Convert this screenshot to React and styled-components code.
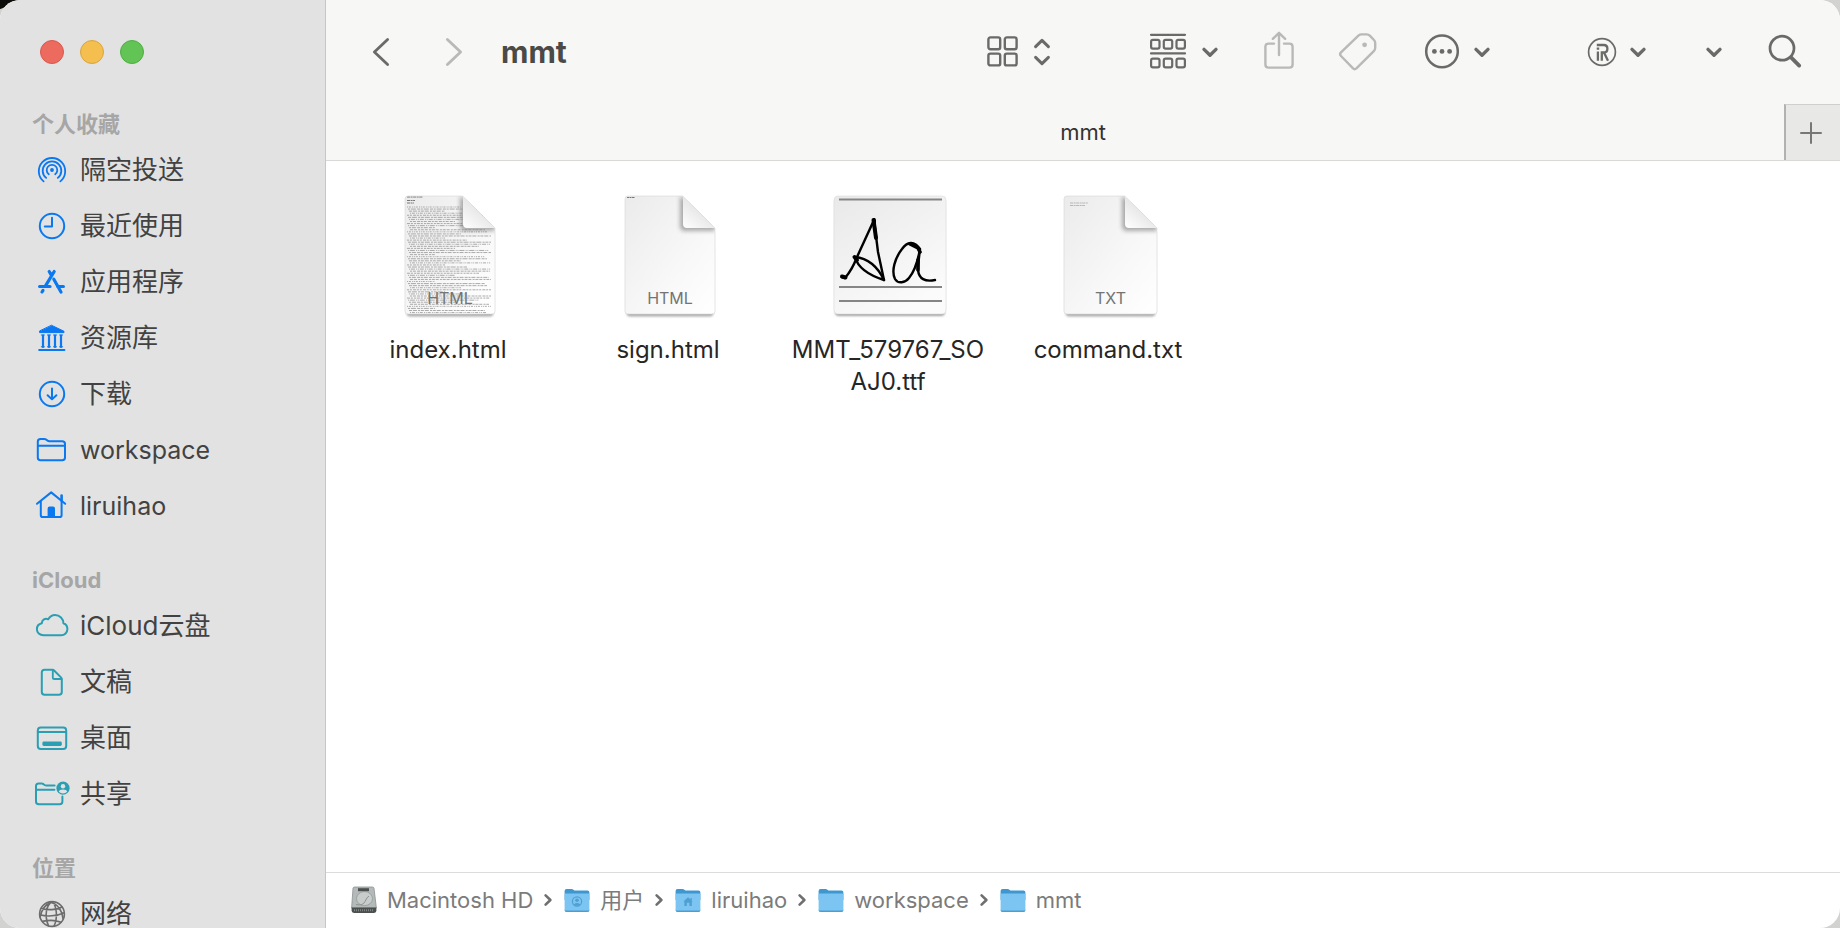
import React from "react";
import styled, { createGlobalStyle } from "styled-components";

const BLUE = "#0a78f0";
const TEAL = "#2a9fb3";
const GREY = "#6c6c6c";
const FONT = `Inter, "Noto Sans CJK SC", sans-serif`;

const GlobalStyle = createGlobalStyle`
  *, *::before, *::after { box-sizing: border-box; }
  body {
    margin: 0;
    font-family: ${FONT};
    background: linear-gradient(158deg, #0c0c08 0 8px, #d2d2d0 9px);
    -webkit-font-smoothing: antialiased;
  }
  button { font: inherit; color: inherit; background: none; border: 0; padding: 0; }
  ul, ol { list-style: none; margin: 0; padding: 0; }
  a { color: inherit; text-decoration: none; }
  svg { display: block; overflow: visible; flex: none; }
`;

const Window = styled.div`
  display: grid;
  grid-template-columns: 326px minmax(0, 1fr);
  height: 100vh;
  border-radius: 20px;
  overflow: hidden;
  background: #fff;
`;

const Sidebar = styled.aside`
  display: flex;
  flex-direction: column;
  min-height: 0;
  background: #e2e2e2;
  border-right: 1px solid #c6c6c6;
  overflow-y: auto;
  scrollbar-width: none;
`;

const TrafficLights = styled.div`
  display: flex;
  flex: none;
  gap: 16px;
  padding: 40px;
  height: 106px;
`;

const Light = styled.button`
  width: 24px;
  height: 24px;
  border-radius: 50%;
  background: ${(p) => p.$color};
  border: 1px solid ${(p) => p.$edge};
`;

const Section = styled.section`
  flex: none;
  margin-bottom: 28px;
`;

const SectionTitle = styled.h2`
  margin: 0;
  padding: 0 0 0 32px;
  height: 36px;
  font-size: 22px;
  font-weight: 700;
  line-height: 36px;
  color: #a6a6a6;
`;

const PlaceLink = styled.a`
  display: flex;
  align-items: center;
  gap: 11px;
  height: 56px;
  padding-left: 35px;
  font-size: ${(p) => (p.$latin ? "25px" : "26px")};
  line-height: 26px;
  color: #424242;
`;

const Main = styled.main`
  display: flex;
  flex-direction: column;
  min-width: 0;
  min-height: 0;
`;

const Toolbar = styled.header`
  display: flex;
  flex: none;
  align-items: center;
  height: 104px;
  padding: 0 38px 0 46px;
  background: #f7f7f5;
  color: #6a6a68;
`;

const History = styled.div`
  display: flex;
  gap: 55px;
`;

const Title = styled.h1`
  margin: 0 auto 0 38px;
  font-size: 30px;
  font-weight: 700;
  line-height: 36px;
  color: #4a4a48;
`;

const ToolGroups = styled.div`
  display: flex;
  gap: 96px;
`;

const ToolGroup = styled.div`
  display: flex;
  gap: 44px;
`;

const ToolButton = styled.button`
  display: flex;
  align-items: center;
  gap: 12px;
  height: 40px;
  padding-left: ${(p) => (p.$inset ? "12px" : "0")};
  &:disabled { color: #b9b9b7; }
`;

const TabBar = styled.div`
  display: grid;
  flex: none;
  grid-template-columns: 56px 1fr 56px;
  height: 57px;
  background: #f7f7f5;
  border-bottom: 1px solid #d9d9d8;
`;

const Tab = styled.button`
  grid-column: 2;
  font-size: 22px;
  font-weight: 400;
  line-height: 28px;
  color: #333331;
`;

const NewTab = styled.button`
  display: flex;
  align-items: center;
  justify-content: center;
  padding-right: 4px;
  background: #e8e8e7;
  border-left: 2px solid #b2b2b1;
  border-top: 1px solid #cfcfce;
  color: #777776;
`;

const Files = styled.ul`
  display: grid;
  flex: 1;
  grid-template-columns: repeat(auto-fill, 220px);
  align-content: start;
  min-height: 0;
  padding: 35px 12px;
  overflow: hidden;
`;

const FileItem = styled.li`
  display: flex;
  flex-direction: column;
  align-items: center;
  gap: 18px;
`;

const Thumbnail = styled.div`
  padding-left: 4px;
`;

const FileName = styled.span`
  font-size: 24px;
  line-height: 32px;
  text-align: center;
  color: #262626;
`;

const Badge = styled.text`
  font-family: ${FONT};
  font-size: 16px;
  fill: #747474;
  text-anchor: middle;
`;

const PathBar = styled.nav`
  flex: none;
  height: 56px;
  padding: 0 25px 2px;
  border-top: 1px solid #dcdcdc;
`;

const Crumbs = styled.ol`
  display: flex;
  align-items: center;
  height: 100%;
`;

const Crumb = styled.li`
  display: flex;
  align-items: center;
  gap: 11px;
`;

const CrumbLink = styled.a`
  display: flex;
  align-items: center;
  gap: 10px;
  font-size: 22px;
  line-height: 28px;
  color: #7b7b7b;
`;

const CrumbArrow = styled.span`
  padding-right: 12px;
  color: #6f6f6f;
`;

function Glyph({ w = 34, h = 34, color = "currentColor", sw = 2, children }) {
  return (
    <svg
      width={w}
      height={h}
      viewBox={`0 0 ${w} ${h}`}
      fill="none"
      stroke={color}
      strokeWidth={sw}
      strokeLinecap="round"
      strokeLinejoin="round"
      aria-hidden="true"
    >
      {children}
    </svg>
  );
}

const AirDropIcon = () => (
  <Glyph color={BLUE} sw={1.8}>
    <circle cx="17" cy="17" r="1.9" fill={BLUE} stroke="none" />
    <path d="M13.8 21.3a5.3 5.3 0 1 1 6.4 0" />
    <path d="M11.2 24.9a9.3 9.3 0 1 1 11.6 0" />
    <path d="M8.6 28.4a13.2 13.2 0 1 1 16.8 0" />
  </Glyph>
);

const ClockIcon = () => (
  <Glyph color={BLUE}>
    <circle cx="17" cy="17" r="12.2" />
    <path d="M17 8.8V17.6H9.8" />
  </Glyph>
);

const AppsIcon = () => (
  <Glyph color={BLUE} sw={3.2}>
    <path d="M19.2 6.5L10.2 21.3M14.2 6.5L16.2 9.8M18.8 14.2L26 27M4.6 21.5H15M22.6 21.5H28.4M8 25.4L7 27" />
  </Glyph>
);

const LibraryIcon = () => (
  <Glyph color={BLUE}>
    <path d="M16.8 4.4L29 10.3V11.6H4.6V10.3Z" fill={BLUE} strokeWidth="1" />
    <path d="M8 14.5V26M14 14.5V26M20 14.5V26M26 14.5V26" strokeWidth="2.2" />
    <path d="M6.3 14H9.4M12.4 14H15.5M18.5 14H21.6M24.6 14H27.6M6.3 25.8H9.4M12.4 25.8H15.5M18.5 25.8H21.6M24.6 25.8H27.6" strokeWidth="1" />
    <path d="M4.2 28.9H29.4" />
  </Glyph>
);

const DownloadIcon = () => (
  <Glyph color={BLUE}>
    <circle cx="17" cy="17" r="12.2" />
    <path d="M17 11.4V22.2M12.6 18.2L17 22.4L21.4 18.2" />
  </Glyph>
);

const FolderIcon = () => (
  <Glyph color={BLUE}>
    <path d="M2.8 24.4V8.6Q2.8 5.9 5.5 5.9H9.2Q10.5 5.9 11.4 6.7L12.4 7.6Q13.2 8.3 14.3 8.3H27.2Q30 8.3 30 11V24.4Q30 27.2 27.2 27.2H5.6Q2.8 27.2 2.8 24.4ZM2.8 12.8H30" />
  </Glyph>
);

const HomeIcon = () => (
  <Glyph color={BLUE}>
    <path d="M2 14.8L16.2 3.4L30.2 14.8" />
    <path d="M5.8 12.4V26.2Q5.8 28 7.6 28H24.8Q26.6 28 26.6 26.2V12.4" />
    <path d="M26.6 6.6V11.4" strokeWidth="2.6" />
    <path d="M13.6 27.4V19.6Q13.6 18.6 14.6 18.6H18Q19 18.6 19 19.6V27.4Z" fill={BLUE} />
  </Glyph>
);

const CloudIcon = () => (
  <Glyph color={TEAL}>
    <path d="M8.6 26.3C4.6 26.3 1.9 23.6 1.9 20.3C1.9 17.2 3.9 14.9 6.8 14.3C6.9 10.8 10.2 8.9 13.2 10.3C14.8 7.5 17.3 6 20 6C24.8 6 28.4 9.7 28.4 14.3C31 15.3 32.4 17.5 32.4 20C32.4 23.5 29.6 26.3 26.2 26.3Z" />
  </Glyph>
);

const DocumentIcon = () => (
  <Glyph color={TEAL}>
    <path d="M6.8 27V7.6Q6.8 4.8 9.6 4.8H17.4Q18.4 4.8 19.1 5.5L26 12.4Q26.8 13.2 26.8 14.4V27Q26.8 29.8 24 29.8H9.6Q6.8 29.8 6.8 27Z" />
    <path d="M17.8 5V12.4Q17.8 14 19.4 14H26.6" strokeWidth="1.8" />
  </Glyph>
);

const DesktopIcon = () => (
  <Glyph color={TEAL}>
    <rect x="2.8" y="6.6" width="28.4" height="21.4" rx="3" />
    <path d="M2.8 11H31.2" strokeWidth="1.8" />
    <rect x="7.4" y="20.6" width="19.4" height="4.4" rx="1.4" fill={TEAL} stroke="none" />
  </Glyph>
);

const SharedIcon = () => (
  <Glyph color={TEAL}>
    <path d="M19.6 8.6H11.4Q10.4 8.6 9.6 8L8.6 7.2Q7.8 6.5 6.6 6.5H3.6Q1 6.5 1 9.1V24.4Q1 27.2 3.8 27.2H24.6Q27.4 27.2 27.4 24.4V19.6M1 12.8H19.4" />
    <circle cx="28" cy="11.2" r="6.6" fill={TEAL} stroke="none" />
    <circle cx="28" cy="9.2" r="2.2" fill="#e2e2e2" stroke="none" />
    <path d="M23.8 14.8Q24.4 12.4 28 12.4Q31.6 12.4 32.2 14.8Q30.4 16.4 28 16.4Q25.6 16.4 23.8 14.8Z" fill="#e2e2e2" stroke="none" />
  </Glyph>
);

const NetworkIcon = () => (
  <Glyph color={GREY} sw={1.6}>
    <circle cx="17" cy="17" r="12.4" />
    <path d="M17 4.8C11 8.4 9.2 19 13.6 29M17 4.8C21.8 8 23 21 19 29.2M14.6 4.8C21.4 6.6 26.6 12 28 21.4M6.4 11.2C12.4 13.4 21.6 13.2 27 10M4.8 17.8C12 19.8 22 19.2 29.2 15.8M7.4 24.4C13 23.2 21.4 23.4 26 25.2M16 5C10.6 7.6 6.2 13 5.2 20" />
  </Glyph>
);

const ChevronDown = () => (
  <Glyph w={20} h={20} sw={3.4}>
    <path d="M4 7.4L10 13.2L16 7.4" />
  </Glyph>
);

const UpDownIcon = () => (
  <Glyph w={20} h={34} sw={3}>
    <path d="M3.6 11.6L10 5.4L16.4 11.6M3.6 22.4L10 28.6L16.4 22.4" />
  </Glyph>
);

const GridIcon = () => (
  <Glyph sw={2.4}>
    <rect x="2.4" y="2.4" width="11.8" height="11.8" rx="2" />
    <rect x="18.8" y="2.4" width="11.8" height="11.8" rx="2" />
    <rect x="2.4" y="18.6" width="11.8" height="11.8" rx="2" />
    <rect x="18.8" y="18.6" width="11.8" height="11.8" rx="2" />
  </Glyph>
);

const GroupIcon = () => (
  <Glyph w={40} h={40} sw={2.2}>
    <path d="M3 2.8H37M3 21.4H37" />
    {[7.8, 26.6].map((y) =>
      [3.1, 15.8, 28.5].map((x) => (
        <rect key={`${x}-${y}`} x={x} y={y} width="8.4" height="8.8" rx="1.8" />
      ))
    )}
  </Glyph>
);

const ShareIcon = () => (
  <Glyph w={30} h={40} sw={2.4}>
    <path d="M10 11.6H4.6Q1.4 11.6 1.4 14.8V32.4Q1.4 35.6 4.6 35.6H25.4Q28.6 35.6 28.6 32.4V14.8Q28.6 11.6 25.4 11.6H20" />
    <path d="M15 23V1.4M8.8 6.8L15 .8L21.2 6.8" />
  </Glyph>
);

const TagIcon = () => (
  <Glyph w={40} h={40} sw={2.4}>
    <path d="M20.4 3.6Q21.8 2.4 23.6 2.4H28.8Q30.6 2.4 31.8 3.6L36 8Q37.2 9.2 37.2 11V15.8Q37.2 17.8 35.8 19.2L18.4 36.4Q16.6 38 14.8 36.2L3 24Q1.2 22.2 3 20.4Z" />
    <circle cx="26.6" cy="12.8" r="2.4" fill="currentColor" stroke="none" />
  </Glyph>
);

const MoreIcon = () => (
  <Glyph w={38} h={40} sw={2.5}>
    <circle cx="20" cy="19.4" r="15.8" />
    <g fill="currentColor" stroke="none">
      <circle cx="12.4" cy="19.4" r="2.4" />
      <circle cx="20" cy="19.4" r="2.4" />
      <circle cx="27.6" cy="19.4" r="2.4" />
    </g>
  </Glyph>
);

const RegisteredLogo = () => (
  <Glyph w={28} h={28} sw={2.2}>
    <circle cx="14" cy="14" r="13.4" strokeWidth="1.7" />
    <g strokeLinecap="butt" strokeLinejoin="miter" strokeWidth="2.3">
      <path d="M8.8 7H15.8Q19.4 7 19.4 10.7Q19.4 14.4 15.8 14.4H13.8V22.8" />
      <path d="M16 14.6L20 22.8M9.900 13.400V22.8M8.700 10.600H11.200" />
    </g>
  </Glyph>
);

const SearchIcon = () => (
  <Glyph w={34} h={36} sw={2.7}>
    <circle cx="14" cy="14.2" r="12" />
    <path d="M23 23.4L31.2 31.6" strokeWidth="3.8" />
  </Glyph>
);

const PageShape = ({ id, w, children, label }) => {
  const f = w - 32;
  return (
    <svg width={w} height="120" viewBox={`0 0 ${w} 120`} aria-hidden="true">
      <defs>
        <linearGradient id={`${id}-page`} x1="0" y1="0" x2="1" y2="1">
          <stop offset="0" stopColor="#ebebeb" />
          <stop offset=".6" stopColor="#f8f8f8" />
          <stop offset="1" stopColor="#fff" />
        </linearGradient>
        <linearGradient id={`${id}-fold`} x1="0" y1="1" x2=".5" y2=".4">
          <stop offset="0" stopColor="#fff" />
          <stop offset="1" stopColor="#e6e6e6" />
        </linearGradient>
        <clipPath id={`${id}-clip`}>
          <path d={`M3 0H${f}L${w} 32V115Q${w} 118 ${w - 3} 118H3Q0 118 0 115V3Q0 0 3 0Z`} />
        </clipPath>
        <filter id={`${id}-blur`} x="-50%" y="-50%" width="200%" height="200%">
          <feGaussianBlur stdDeviation="2" />
        </filter>
        <filter id={`${id}-shade`} x="-10%" y="-10%" width="120%" height="120%">
          <feGaussianBlur stdDeviation="1" />
        </filter>
      </defs>
      <path
        d={`M3 40V116Q3 119 5 119H${w - 5}Q${w - 3} 119 ${w - 3} 116V40Z`}
        fill="#8a8a8a"
        stroke="#8a8a8a"
        strokeWidth="3"
        opacity=".7"
        filter={`url(#${id}-shade)`}
      />
      <g clipPath={`url(#${id}-clip)`}>
        <rect width={w} height="118" fill={`url(#${id}-page)`} />
        {children}
        <path d={`M${f - 3} 0V30Q${f - 3} 35 ${f + 2} 35H${w}V20Z`} fill="#777" opacity=".6" filter={`url(#${id}-blur)`} />
      </g>
      <path
        d={`M3 0H${f}M${w} 32V115Q${w} 118 ${w - 3} 118H3Q0 118 0 115V3Q0 0 3 0`}
        fill="none"
        stroke="#d6d6d6"
        strokeWidth=".6"
      />
      <path d={`M${f} 0L${w} 32H${f + 4}Q${f} 32 ${f} 28Z`} fill={`url(#${id}-fold)`} />
      <Badge x={w / 2} y="108">{label}</Badge>
    </svg>
  );
};

const codeLines = Array.from({ length: 52 }, (_, i) => ({
  y: 11 + i * 2.07,
  indent: (i * 5) % 4,
  end: [56, 40, 86, 74, 84, 30, 82, 86, 62, 85, 50, 86, 80][(i * 7) % 13],
  dash: `${1 + (i % 3)} .9 ${2 + ((i * 3) % 4)} 1.2 ${1 + ((i * 5) % 3)} .8`,
}));

const IndexPreview = () => (
  <PageShape id="index" w={90} label="HTML">
    <path d="M2 1H18M2 4.500H10M2 7H9" stroke="#777" strokeWidth="1" strokeDasharray="3 .6 2 .5" />
    {codeLines.map((l) => (
      <path
        key={l.y}
        d={`M${2 + l.indent} ${l.y}H${l.end}`}
        stroke="#a2a2a2"
        strokeWidth=".9"
        strokeDasharray={l.dash}
      />
    ))}
  </PageShape>
);

const SignPreview = () => (
  <PageShape id="sign" w={90} label="HTML">
    <path d="M2 1.500H10" stroke="#777" strokeWidth="1.2" strokeDasharray="2 .5" />
  </PageShape>
);

const CommandPreview = () => (
  <PageShape id="command" w={93} label="TXT">
    <path d="M6 7H24M6 9.500H21" stroke="#aaa" strokeWidth=".8" strokeDasharray="3 .6 2 .5" />
  </PageShape>
);

const FontPreview = () => (
  <svg width="112" height="120" viewBox="0 0 112 120" aria-hidden="true">
    <defs>
      <linearGradient id="font-page" x1="0" y1="0" x2=".6" y2="1">
        <stop offset="0" stopColor="#e9e9e9" />
        <stop offset="1" stopColor="#fbfbfb" />
      </linearGradient>
      <filter id="font-blur">
        <feGaussianBlur stdDeviation="1.2" />
      </filter>
    </defs>
    <rect x="1" y="3" width="110" height="117" rx="4" fill="#a2a2a2" filter="url(#font-blur)" />
    <rect width="112" height="118" rx="4" fill="url(#font-page)" stroke="#dcdcdc" strokeWidth=".6" />
    <path d="M5 3.500H108M5 91H108M5 105H108" stroke="#858585" strokeWidth="1.8" />
    <g fill="none" stroke="#000" strokeWidth="2.4" strokeLinecap="round" strokeLinejoin="round">
      <path d="M8 81L11 82Q18 74 23 61L40 24L44 56L50 84" />
      <path d="M40 24V28M39.500 24L42 42" strokeWidth="4" />
      <path d="M8 80.500L11.500 81.500" strokeWidth="4" />
      <path d="M50 84Q40 63 21 61Q25 76 50 84" />
      <path d="M20.500 61L23 64" strokeWidth="4" />
      <path d="M86 53C80 44 73 46 68 53C61 62 57 75 61 83C64 88 71 87 75 82C80 76 84 64 86 53C85 62 84 68 84 74C85 83 91 86 101 84" />
      <path d="M76 48L84 52L86 56M84 64L84 74" strokeWidth="3.6" />
    </g>
  </svg>
);

const DiskIcon = () => (
  <svg width="26" height="28" viewBox="0 0 26 28" aria-hidden="true">
    <path d="M3.500 1H21.500Q22.800 1 23 2.300L25.400 22H.6L2 2.300Q2.200 1 3.500 1Z" fill="#b4bab9" stroke="#8b9290" strokeWidth=".8" />
    <path d="M.6 21.500H25.400V24.600Q25.400 27 23 27H3Q.6 27 .6 24.600Z" fill="#4b504f" />
    <path d="M3 24.300H23" stroke="#7f8583" strokeWidth="2" strokeDasharray="1 1" />
    <ellipse cx="13.500" cy="12.600" rx="8" ry="7" fill="#c8cdcc" stroke="#949b99" strokeWidth=".8" />
    <path d="M5 18.500Q12 20 14 15.500T18 10" fill="none" stroke="#8d9492" strokeWidth="1" />
    <rect x="7" y="2.200" width="11" height="3" fill="#4b504f" />
  </svg>
);

const BlueFolder = ({ mark }) => (
  <svg width="26" height="28" viewBox="0 0 26 28" aria-hidden="true">
    <path d="M.6 5Q.6 3 2.600 3H7.600Q8.600 3 9.400 3.700L10.400 4.500H23.400Q25.400 4.500 25.400 6.500V14H.6Z" fill="#3f97cf" />
    <path d="M.6 8.500Q.6 7.500 1.600 7.500H24.400Q25.400 7.500 25.400 8.500V24Q25.400 26 23.400 26H2.600Q.6 26 .6 24Z" fill="#7cc5f2" />
    <path d="M.6 23.400V24Q.6 26 2.600 26H23.400Q25.400 26 25.400 24V23.400Q25 24.600 23.400 24.600H2.600Q1 24.600 .6 23.400Z" fill="#4a9fd2" />
    {mark === "user" && (
      <g stroke="#4f9fd2" fill="none">
        <circle cx="13" cy="15.500" r="4.600" strokeWidth="1.200" />
        <circle cx="13" cy="14.300" r="1.800" fill="#4f9fd2" stroke="none" />
        <path d="M9.800 18.400Q13 15.800 16.200 18.400Q13 21 9.800 18.400Z" fill="#4f9fd2" stroke="none" />
      </g>
    )}
    {mark === "home" && (
      <path d="M8.400 15.500L13 11.200L15.600 13.500V12H16.800V14.800L17.800 15.500H16.800V20H14.400V16.800H11.800V20H9.400V15.500Z" fill="#4f9fd2" />
    )}
  </svg>
);

const sections = [
  {
    title: "个人收藏",
    items: [
      { name: "隔空投送", Icon: AirDropIcon },
      { name: "最近使用", Icon: ClockIcon },
      { name: "应用程序", Icon: AppsIcon },
      { name: "资源库", Icon: LibraryIcon },
      { name: "下载", Icon: DownloadIcon },
      { name: "workspace", Icon: FolderIcon, latin: true },
      { name: "liruihao", Icon: HomeIcon, latin: true },
    ],
  },
  {
    title: "iCloud",
    items: [
      { name: "iCloud云盘", Icon: CloudIcon },
      { name: "文稿", Icon: DocumentIcon },
      { name: "桌面", Icon: DesktopIcon },
      { name: "共享", Icon: SharedIcon },
    ],
  },
  { title: "位置", items: [{ name: "网络", Icon: NetworkIcon }] },
];

const files = [
  { name: ["index.html"], Preview: IndexPreview },
  { name: ["sign.html"], Preview: SignPreview },
  { name: ["MMT_579767_SO", "AJ0.ttf"], Preview: FontPreview },
  { name: ["command.txt"], Preview: CommandPreview },
];

const crumbs = [
  { name: "Macintosh HD", icon: <DiskIcon /> },
  { name: "用户", icon: <BlueFolder mark="user" /> },
  { name: "liruihao", icon: <BlueFolder mark="home" /> },
  { name: "workspace", icon: <BlueFolder /> },
  { name: "mmt", icon: <BlueFolder /> },
];

export default function App() {
  return (
    <>
      <GlobalStyle />
      <Window>
        <Sidebar>
          <TrafficLights>
            <Light aria-label="关闭" $color="#ec6a5e" $edge="#d8584e" />
            <Light aria-label="最小化" $color="#f4bf4f" $edge="#d9a53c" />
            <Light aria-label="缩放" $color="#61c454" $edge="#4fae42" />
          </TrafficLights>
          {sections.map((s) => (
            <Section key={s.title}>
              <SectionTitle>{s.title}</SectionTitle>
              <ul>
                {s.items.map(({ name, Icon, latin }) => (
                  <li key={name}>
                    <PlaceLink href="#" $latin={latin}>
                      <Icon />
                      <span>{name}</span>
                    </PlaceLink>
                  </li>
                ))}
              </ul>
            </Section>
          ))}
        </Sidebar>
        <Main>
          <Toolbar>
            <History>
              <ToolButton aria-label="后退">
                <Glyph w={18} h={30} sw={2.8}>
                  <path d="M15.600 2.400L2.400 15L15.600 27.600" />
                </Glyph>
              </ToolButton>
              <ToolButton aria-label="前进" disabled>
                <Glyph w={18} h={30} sw={2.8}>
                  <path d="M2.400 2.400L15.600 15L2.400 27.600" />
                </Glyph>
              </ToolButton>
            </History>
            <Title>mmt</Title>
            <ToolGroups>
              <ToolButton aria-label="显示方式">
                <GridIcon />
                <UpDownIcon />
              </ToolButton>
              <ToolGroup>
                <ToolButton aria-label="分组">
                  <GroupIcon />
                  <ChevronDown />
                </ToolButton>
                <ToolButton aria-label="共享" disabled>
                  <ShareIcon />
                </ToolButton>
                <ToolButton aria-label="标签" disabled>
                  <TagIcon />
                </ToolButton>
                <ToolButton aria-label="更多">
                  <MoreIcon />
                  <ChevronDown />
                </ToolButton>
              </ToolGroup>
              <ToolGroup>
                <ToolButton aria-label="扩展">
                  <RegisteredLogo />
                  <ChevronDown />
                </ToolButton>
                <ToolButton aria-label="其他工具" $inset>
                  <ChevronDown />
                </ToolButton>
                <ToolButton aria-label="搜索">
                  <SearchIcon />
                </ToolButton>
              </ToolGroup>
            </ToolGroups>
          </Toolbar>
          <TabBar>
            <Tab>mmt</Tab>
            <NewTab aria-label="新建标签页">
              <Glyph w={22} h={22}>
                <path d="M11 1V21M1 11H21" />
              </Glyph>
            </NewTab>
          </TabBar>
          <Files>
            {files.map(({ name, Preview }) => (
              <FileItem key={name[0]}>
                <Thumbnail>
                  <Preview />
                </Thumbnail>
                <FileName>
                  {name[0]}
                  {name[1] && (
                    <>
                      <br />
                      {name[1]}
                    </>
                  )}
                </FileName>
              </FileItem>
            ))}
          </Files>
          <PathBar aria-label="路径">
            <Crumbs>
              {crumbs.map((c, i) => (
                <Crumb key={c.name}>
                  <CrumbLink href="#">
                    {c.icon}
                    <span>{c.name}</span>
                  </CrumbLink>
                  {i < crumbs.length - 1 && (
                    <CrumbArrow>
                      <Glyph w={8} h={12} sw={2.6}>
                        <path d="M1.600 1.400L6.400 6L1.600 10.600" />
                      </Glyph>
                    </CrumbArrow>
                  )}
                </Crumb>
              ))}
            </Crumbs>
          </PathBar>
        </Main>
      </Window>
    </>
  );
}
